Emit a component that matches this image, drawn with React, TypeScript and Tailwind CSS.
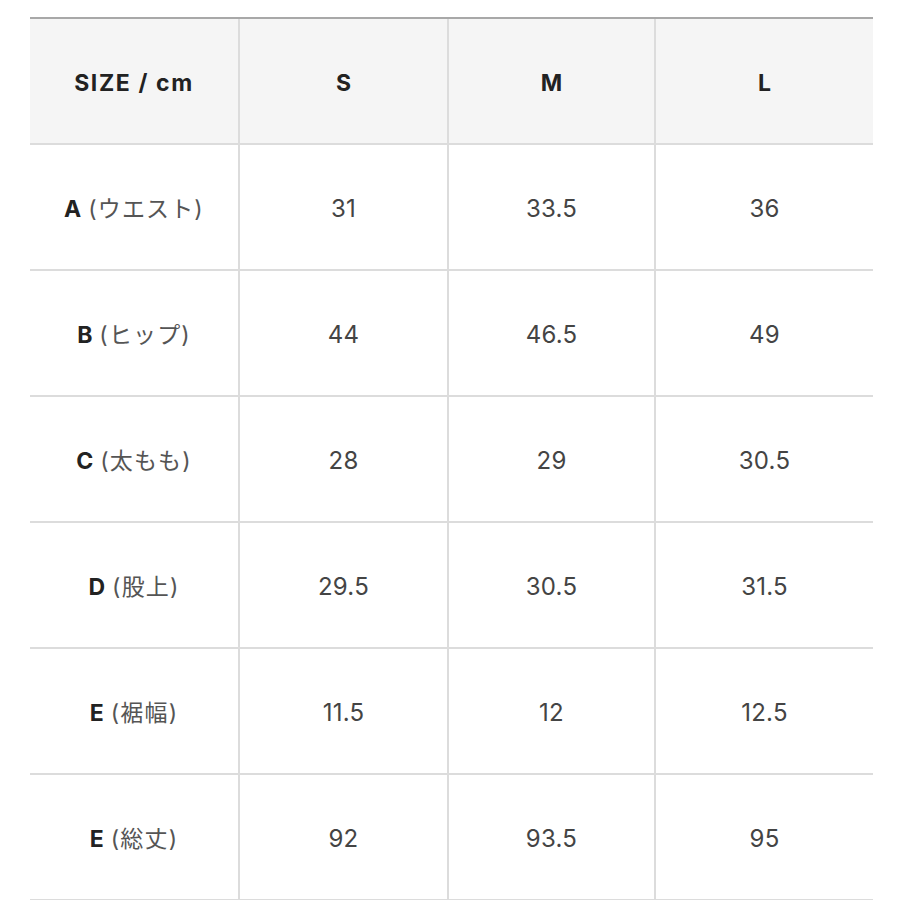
import React from "react";

const rows: { k: string; j: string; v: string[] }[] = [
  { k: "A", j: "(ウエスト)", v: ["31", "33.5", "36"] },
  { k: "B", j: "(ヒップ)", v: ["44", "46.5", "49"] },
  { k: "C", j: "(太もも)", v: ["28", "29", "30.5"] },
  { k: "D", j: "(股上)", v: ["29.5", "30.5", "31.5"] },
  { k: "E", j: "(裾幅)", v: ["11.5", "12", "12.5"] },
  { k: "E", j: "(総丈)", v: ["92", "93.5", "95"] },
];

export default function App() {
  return (
    <div
      className="w-[900px] h-[900px] bg-white overflow-hidden"
      style={{ fontFamily: '"Inter", "Noto Sans CJK JP", sans-serif' }}
    >
      <div className="ml-[30px] mt-[17px] w-[843px] border-t-2 border-[#a8a8a8] grid grid-cols-[208px_209px_207px_219px]">
        <div className="h-[126px] pt-[4px] bg-[#f5f5f5] border-b-2 border-[#dcdcdc] flex items-center justify-center text-[23px] tracking-[0.07em] font-bold text-[#222]">
          SIZE / cm
        </div>
        {["S", "M", "L"].map((s) => (
          <div
            key={s}
            className="h-[126px] pt-[4px] bg-[#f5f5f5] border-b-2 border-l-2 border-[#dcdcdc] flex items-center justify-center text-[23px] font-bold text-[#222]"
          >
            {s}
          </div>
        ))}
        {rows.map((r, i) => (
          <React.Fragment key={i}>
            <div className="h-[126px] pt-[4px] border-b-2 border-[#dcdcdc] flex items-center justify-center">
              <span className="font-bold text-[23px] text-[#222]">{r.k}</span>
              <span className="ml-[7px] text-[23px] tracking-[0.05em] text-[#555]">{r.j}</span>
            </div>
            {r.v.map((v, j) => (
              <div
                key={j}
                className="h-[126px] pt-[4px] border-b-2 border-l-2 border-[#dcdcdc] flex items-center justify-center text-[24px] tracking-[0.01em] text-[#444]"
              >
                {v}
              </div>
            ))}
          </React.Fragment>
        ))}
      </div>
    </div>
  );
}
